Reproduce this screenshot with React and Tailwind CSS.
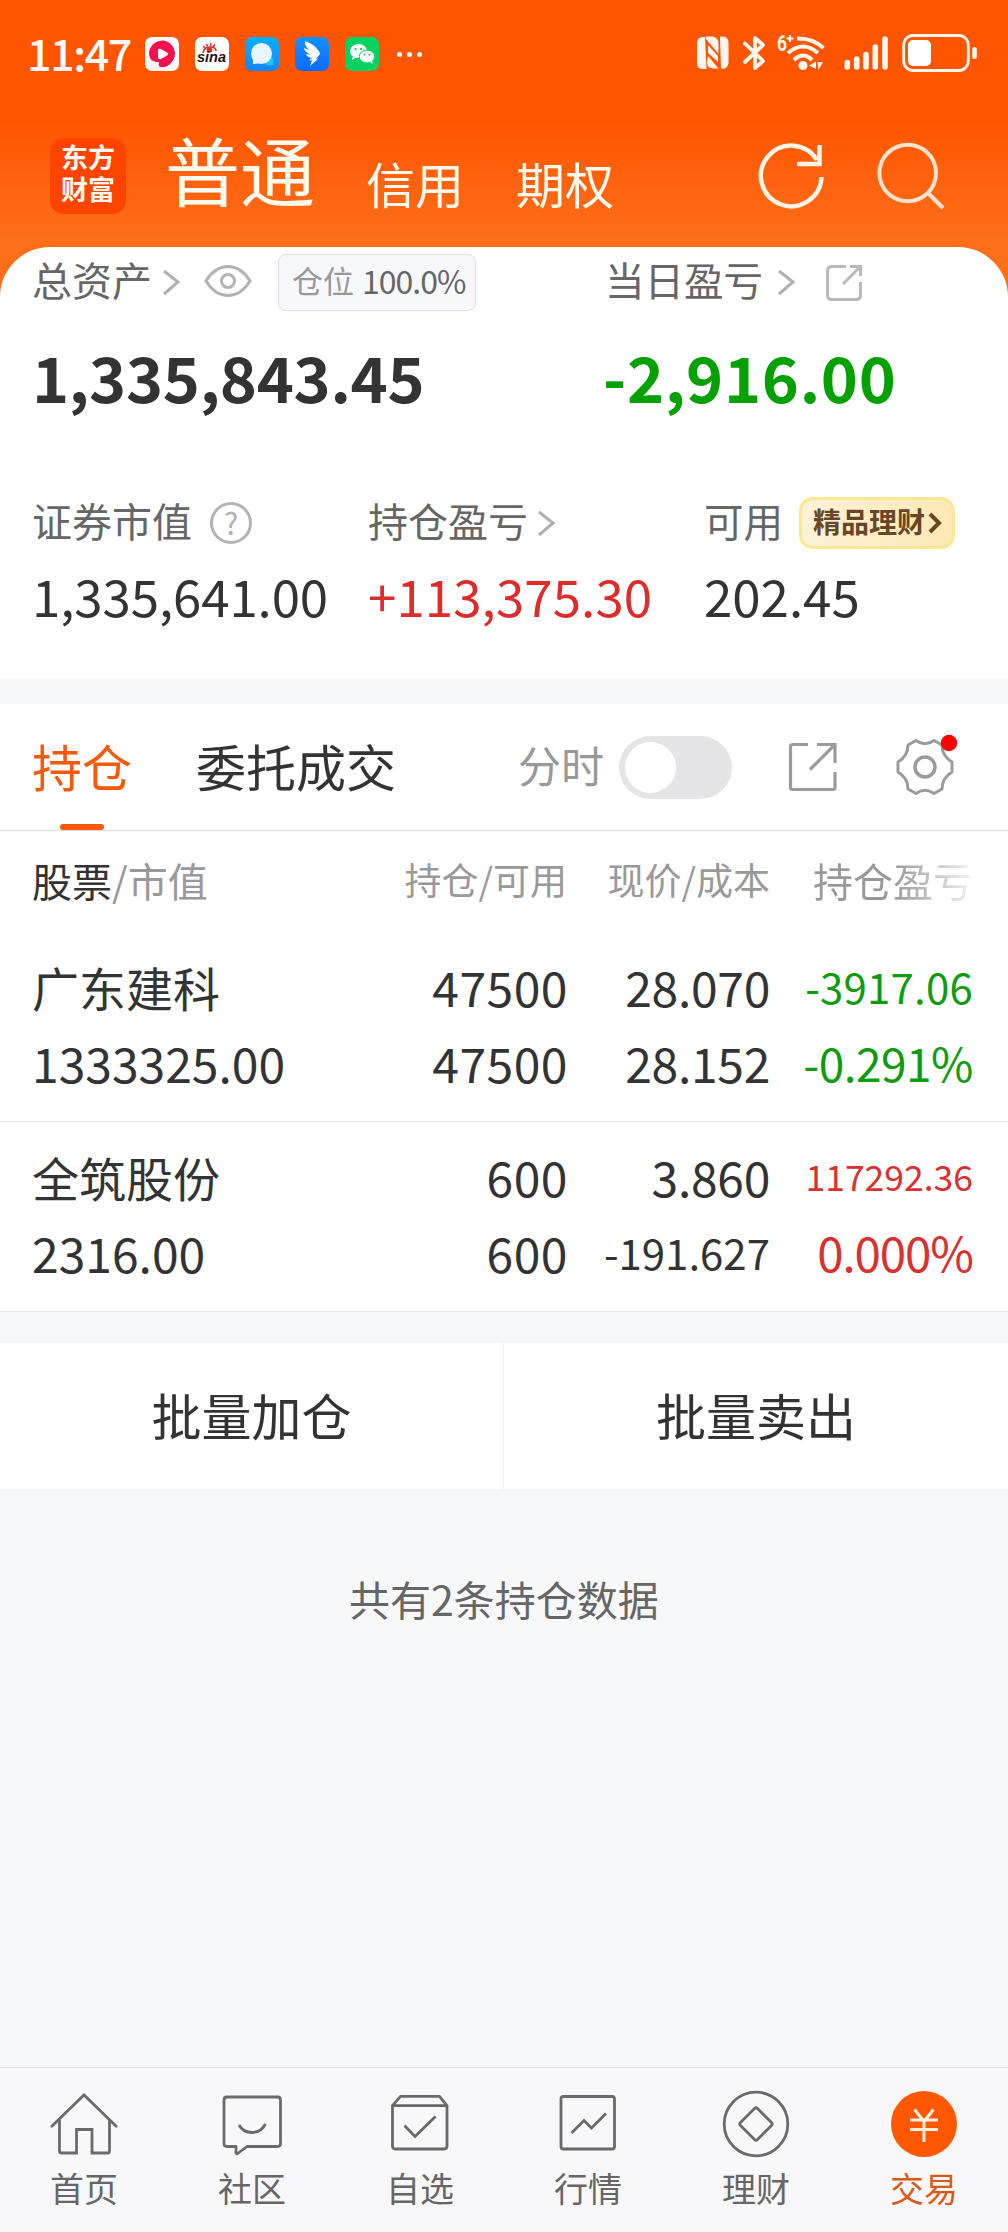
import { useState } from "react";

const holdings = [
  {
    name: "广东建科",
    value: "1333325.00",
    amount: "47500",
    available: "47500",
    price: "28.070",
    cost: "28.152",
    profit: "-3917.06",
    percent: "-0.291%",
    color: "text-[#0f9b0f]",
    costClass: "text-[48px] tracking-[-0.3px]",
    profitClass: "text-[42px] tracking-[0.2px]",
    percentClass: "text-[46px] tracking-[-0.5px]",
  },
  {
    name: "全筑股份",
    value: "2316.00",
    amount: "600",
    available: "600",
    price: "3.860",
    cost: "-191.627",
    profit: "117292.36",
    percent: "0.000%",
    color: "text-[#d93030]",
    costClass: "text-[42px]",
    profitClass: "text-[35.5px]",
    percentClass: "text-[47.5px] tracking-[-1.1px]",
  },
];

function Chevron() {
  return (
    <svg width="20" height="28" viewBox="0 0 20 28" fill="none" stroke="#b0b0b0" strokeWidth="3">
      <path d="M3 3 L17 14 L3 26" />
    </svg>
  );
}

function AppIcons() {
  return (
    <div className="flex gap-4 ml-[13px]">
      <svg width="34" height="34" viewBox="0 0 34 34">
        <rect width="34" height="34" rx="7" fill="#fff" />
        <path d="M4 17 A13 13 0 1 1 26 26 Q22 31 15 30 Q13 29 14 25 Q5 26 4 17Z" fill="#f5114c" />
        <path d="M13 13 Q13 11 16 12 L22 15.5 Q24 17 22 18.5 L16 22 Q13 23 13 20Z" fill="#fff" />
      </svg>
      <svg width="34" height="34" viewBox="0 0 34 34">
        <rect width="34" height="34" rx="7" fill="#fff" />
        <g fill="none" stroke="#d8301c" strokeWidth="1.6">
          <path d="M8 16 Q9 10 15 10 Q21 10 21 14" />
          <path d="M10 11 L8 9 M12.5 9.500 L11.500 7 M15.500 9 L16 6 M18 10 L20 7.500" />
          <circle cx="14.500" cy="13" r="2" fill="#d8301c" />
        </g>
        <text
          x="2"
          y="24.500"
          fontSize="14"
          fontWeight="bold"
          fontStyle="italic"
          fontFamily="Liberation Sans, sans-serif"
          textLength="29"
          lengthAdjust="spacingAndGlyphs"
          fill="#2b1010"
        >
          sina
        </text>
      </svg>
      <svg width="34" height="34" viewBox="0 0 34 34">
        <defs>
          <linearGradient id="chatBlue" x1="0" y1="0" x2="0" y2="1">
            <stop offset="0" stopColor="#06b0ff" />
            <stop offset="1" stopColor="#1485f7" />
          </linearGradient>
        </defs>
        <rect width="34" height="34" rx="7" fill="url(#chatBlue)" />
        <circle cx="24" cy="24" r="4.500" fill="#1cc3fb" />
        <path d="M24 27 L29 28.500 L27 23Z" fill="#1cc3fb" />
        <circle cx="16.500" cy="16.500" r="10.500" fill="#e9f5ff" />
        <path d="M8 20 L8 27 L16 26Z" fill="#e9f5ff" />
      </svg>
      <svg width="34" height="34" viewBox="0 0 34 34">
        <defs>
          <linearGradient id="wingBlue" x1="0" y1="0" x2="0" y2="1">
            <stop offset="0" stopColor="#1590ff" />
            <stop offset="1" stopColor="#0a6cff" />
          </linearGradient>
        </defs>
        <rect width="34" height="34" rx="7" fill="url(#wingBlue)" />
        <path
          d="M10 4 Q20 8 22 12 Q25 14 25 17 L21 22 L23 22 L15 29 L17 23.500 L14 23 L17 21 Q12 20 11 17 L15 17.500 Q9 14 9 11 L14 13 Q9 8 10 4Z"
          fill="#fff"
        />
      </svg>
      <svg width="34" height="34" viewBox="0 0 34 34">
        <rect width="34" height="34" rx="7" fill="#07d160" />
        <ellipse cx="13.500" cy="14" rx="8.500" ry="7" fill="#fff" />
        <path d="M8 18 L7 23 L12 20Z" fill="#fff" />
        <ellipse cx="22" cy="19.500" rx="7.700" ry="6.500" fill="#fff" stroke="#07d160" strokeWidth="1" />
        <path d="M24 24 L27.500 27 L27 22Z" fill="#fff" />
        <g fill="#07c15a">
          <circle cx="10.500" cy="12" r="1.100" />
          <circle cx="16" cy="12" r="1.100" />
          <circle cx="19.500" cy="17.500" r="1" />
          <circle cx="24.500" cy="17.500" r="1" />
        </g>
      </svg>
    </div>
  );
}

function SystemIcons() {
  return (
    <svg width="280" height="40" viewBox="0 0 280 40" fill="none" stroke="#fff7ee">
      {/* nfc */}
      <g fill="#fff7ee" stroke="none">
        <path d="M6 3 H8 L9.500 35 H6 Q0 35 0 29 V9 Q0 3 6 3Z" />
        <path d="M9 2.500 H15 Q21 3 21.500 9 V20 L9 5Z" />
        <path d="M23 2.500 H26 Q31.500 3 31.500 9 V29 Q31 34 26 35 L24 34Z" />
        <path d="M11 11 L21 22 V28 L11 19Z" />
        <path d="M11 22 L21.500 34.500 H16 Q10 34 10 28Z" />
      </g>
      {/* bluetooth */}
      <path d="M48 9.500 L66 27 L58 34 V4 L66 11 L48 28" strokeWidth="3.800" strokeLinejoin="round" strokeLinecap="round" />
      {/* wifi */}
      <g strokeWidth="4">
        <path d="M100 4.500 Q116 4 126.500 14" />
        <path d="M91 19 Q106 6 121 19" />
        <path d="M97 26 Q106 17 115 26" />
      </g>
      <circle cx="106" cy="31.500" r="4.500" fill="#fff7ee" stroke="none" />
      <path d="M112 31.500 L119 27.500 V35 Z M120.500 28 H126 L121.500 36Z" fill="#fff7ee" stroke="none" />
      <text
        x="80"
        y="17"
        fontSize="22"
        fontWeight="bold"
        fontFamily="Roboto, sans-serif"
        textLength="10"
        lengthAdjust="spacingAndGlyphs"
        fill="#fff7ee"
        stroke="none"
      >
        6
      </text>
      <path d="M89.500 4.500 H96.500 M93 1 V8" strokeWidth="2.200" />
      {/* signal */}
      <g strokeWidth="5.600" strokeLinecap="round">
        <path d="M150.300 28.500 V33 M159.700 25 V33 M169 20.500 V33 M178.300 13 V33 M188 5 V33" />
      </g>
      {/* battery */}
      <rect x="206.700" y="1.500" width="64.600" height="35" rx="9.500" strokeWidth="2.800" />
      <rect x="211" y="6" width="23" height="26" rx="5" fill="#fff" stroke="none" />
      <rect x="275.300" y="13" width="4.500" height="12" rx="2" fill="#fff7ee" stroke="none" />
    </svg>
  );
}

function StatusBar() {
  return (
    <div className="flex items-center justify-between h-[108px] pl-[27px] pr-[31px] text-white">
      <div className="flex items-center">
        <span className="w-[105px] -mt-[4px] text-[43px] leading-none font-medium tracking-[-1.4px]">11:47</span>
        <AppIcons />
        <div className="flex gap-[5px] ml-[18px]">
          <i className="size-[5px] rounded-full bg-white" />
          <i className="size-[5px] rounded-full bg-white" />
          <i className="size-[5px] rounded-full bg-white" />
        </div>
      </div>
      <SystemIcons />
    </div>
  );
}

function TopBar() {
  return (
    <div className="flex items-start h-[139px] pl-[50px] text-[#fffaf0]">
      <div className="mt-[30px] flex size-[76px] flex-col items-center rounded-[14px] bg-[#ff4400] pt-[5px] font-['Liberation_Sans','Noto_Sans_CJK_SC',sans-serif] text-[27px] leading-[32px] font-bold">
        <span>东方</span>
        <span>财富</span>
      </div>
      <span className="mt-[23px] ml-[39px] w-[150px] text-[75px] leading-[75px]">普通</span>
      <span className="mt-[50px] ml-[51px] w-[100px] text-[49px] leading-[50px]">信用</span>
      <span className="mt-[50px] ml-[50px] w-[100px] text-[49px] leading-[50px]">期权</span>
      <svg className="mt-[31px] ml-[139px]" width="72" height="72" viewBox="0 0 72 72" fill="none" stroke="#fff4e6" strokeWidth="4.500">
        <path d="M66.500 38 A30.300 30.300 0 1 1 62 21" />
        <path d="M64.500 6 V25 H42" />
      </svg>
      <svg className="mt-[32px] ml-[47px]" width="72" height="72" viewBox="0 0 72 72" fill="none" stroke="#ffe3cf" strokeWidth="4">
        <circle cx="33.700" cy="33" r="28.300" />
        <path d="M53 52 L69 68" />
      </svg>
    </div>
  );
}

function AssetCard() {
  return (
    <section className="h-[432px] rounded-t-[50px] bg-white pl-[32px] text-[#333]">
      <div className="flex h-[70px]">
        <div className="flex items-center w-[573px]">
          <span className="-mt-[7px] text-[40px] leading-none text-[#666]">总资产</span>
          <span className="ml-[9px]">
            <Chevron />
          </span>
          <svg className="ml-[23px] -mt-[2px]" width="48" height="34" viewBox="0 0 48 34" fill="none" stroke="#b3b3b3" strokeWidth="3">
            <path d="M2 17 Q11 2.500 24 2.500 Q37 2.500 46 17 Q37 31.500 24 31.500 Q11 31.500 2 17Z" />
            <circle cx="24" cy="17" r="6.500" />
          </svg>
          <div className="flex items-center ml-[26px] h-[57px] w-[198px] rounded-[8px] border border-[#dedede] bg-[#f7f8fb] pl-[13px] pb-[5px] text-[31px] leading-none whitespace-nowrap">
            <span className="text-[#999]">仓位</span>
            <span className="ml-[8px] text-[32px] tracking-[-1px] text-[#666]">100.0%</span>
          </div>
        </div>
        <div className="flex items-center">
          <span className="-mt-[7px] text-[39.5px] leading-none text-[#666]">当日盈亏</span>
          <span className="ml-[13px]">
            <Chevron />
          </span>
          <svg className="ml-[28px] mt-[2px]" width="40" height="40" viewBox="0 0 40 40" fill="none" stroke="#b9b9b9" strokeWidth="3">
            <path d="M22 3.500 H8 Q3.500 3.500 3.500 8 V32 Q3.500 36.500 8 36.500 H32 Q36.500 36.500 36.500 32 V19" />
            <path d="M26 3.500 H36.500 V13 M36 4 L19 21" />
          </svg>
        </div>
      </div>

      <div className="flex items-center h-[117px] text-[63px] leading-none font-bold whitespace-nowrap">
        <span className="w-[571px] tracking-[-0.3px]">1,335,843.45</span>
        <span className="tracking-[0.7px] text-[#04a004]">-2,916.00</span>
      </div>

      <div className="grid grid-cols-[336px_336px_1fr] mt-[59px] text-[40px] leading-none text-[#666]">
        <div className="flex items-center h-[60px]">
          <span className="-mt-[7px]">证券市值</span>
          <span className="ml-[18px] flex size-[42px] items-center justify-center rounded-full border-[3px] border-[#b3b3b3] pb-[3px] text-[30px] text-[#b0b0b0]">
            ?
          </span>
        </div>
        <div className="flex items-center h-[60px]">
          <span className="-mt-[7px]">持仓盈亏</span>
          <span className="ml-[8px]">
            <Chevron />
          </span>
        </div>
        <div className="flex items-center h-[60px]">
          <span className="-mt-[7px] text-[39.5px]">可用</span>
          <div className="flex items-center ml-[16px] h-[52px] w-[156px] rounded-[14px] border-[3px] border-[#fbe795] bg-linear-to-r from-[#fdf2d8] to-[#fde9b3] pl-[11px] text-[28px] font-bold text-[#6b4526]">
            <span className="-mt-[4px]">精品理财</span>
            <svg className="ml-[3px]" width="14" height="22" viewBox="0 0 14 22" fill="none" stroke="#6b4526" strokeWidth="4">
              <path d="M2 2 L11 11 L2 20" />
            </svg>
          </div>
        </div>
      </div>

      <div className="grid grid-cols-[336px_336px_1fr] items-center mt-[2px] h-[80px] text-[51px] leading-none whitespace-nowrap">
        <span className="tracking-[-0.1px]">1,335,641.00</span>
        <span className="tracking-[0.1px] text-[#dd2c2c]">+113,375.30</span>
        <span>202.45</span>
      </div>
    </section>
  );
}

function TabBar({ tab, setTab, timeline, setTimeline }) {
  return (
    <div className="flex items-center h-[127px] border-b border-[#dcdcdc] bg-white pl-[32px] text-[50px] leading-none">
      <button
        onClick={() => setTab("hold")}
        className={tab === "hold" ? "relative flex h-full items-center pb-[5px] text-[#f55a0a]" : "relative flex h-full items-center pb-[5px] text-[#333]"}
      >
        持仓
        {tab === "hold" && <i className="absolute bottom-0 left-[28px] h-[6px] w-[44px] rounded-full bg-[#fb560a]" />}
      </button>
      <button
        onClick={() => setTab("orders")}
        className={tab === "orders" ? "ml-[64px] pb-[5px] text-[#f55a0a]" : "ml-[64px] pb-[5px] text-[#333]"}
      >
        委托成交
      </button>
      <span className="ml-[122px] pb-[5px] text-[43px] text-[#999]">分时</span>
      <button
        onClick={() => setTimeline(!timeline)}
        className={
          timeline
            ? "ml-[15px] flex h-[63px] w-[113px] items-center justify-end rounded-full bg-[#fb560a] px-[6px]"
            : "ml-[15px] flex h-[63px] w-[113px] items-center rounded-full bg-[#e5e5e7] px-[6px]"
        }
      >
        <i className="size-[51px] rounded-full bg-white" />
      </button>
      <svg className="ml-[55px]" width="52" height="52" viewBox="0 0 52 52" fill="none" stroke="#9b9b9b" strokeWidth="3.200">
        <path d="M21 3.500 H6 Q3.500 3.500 3.500 6 V46.500 Q3.500 48.500 6 48.500 H46 Q48 48.500 48 46.500 V31" />
        <path d="M30 3.500 H48 V22 M47.500 4 L23 28.500" />
      </svg>
      <svg className="ml-[56px]" width="64" height="72" viewBox="0 0 64 72" fill="none" stroke="#9b9b9b" strokeWidth="3">
        <path
          strokeLinejoin="round"
          d="M21 9.500 Q30 16 39 9.500 L47 14 Q47 25 57 31 V41 Q47 47 47 58 L39 62.500 Q30 56 21 62.500 L13 58 Q13 47 3 41 V31 Q13 25 13 14Z"
        />
        <circle cx="30" cy="36" r="10" strokeWidth="3.500" />
        <circle cx="54" cy="12" r="8.200" fill="#fe0000" stroke="none" />
      </svg>
    </div>
  );
}

function HoldingTable() {
  return (
    <div className="bg-white text-[#333] leading-none whitespace-nowrap">
      <div className="grid grid-cols-[346px_189px_203px_204px] items-center h-[101px] pl-[32px] pb-[4px] text-[37px] text-[#999]">
        <span className="text-[40px]">
          <span className="text-[#333]">股票</span>/市值
        </span>
        <span className="text-right">持仓/可用</span>
        <span className="text-right">现价/成本</span>
        <span className="bg-linear-to-r from-[#999] from-60% to-[#f4f4f4] bg-clip-text pb-[4px] -mb-[4px] pl-[43px] text-[40px] text-transparent">
          持仓盈亏
        </span>
      </div>
      {holdings.map((h) => (
        <div
          key={h.name}
          className="grid grid-cols-[346px_190px_202px_203px] auto-rows-[76px] items-center border-b border-[#e8e8ea] pl-[32px] pt-[16px] pb-[21px] text-[48px]"
        >
          <span className="text-[47px]">{h.name}</span>
          <span className="text-right tracking-[0.5px]">{h.amount}</span>
          <span className="text-right tracking-[-0.3px]">{h.price}</span>
          <span className={`text-right ${h.color} ${h.profitClass}`}>{h.profit}</span>
          <span>{h.value}</span>
          <span className="text-right tracking-[0.5px]">{h.available}</span>
          <span className={`text-right ${h.costClass}`}>{h.cost}</span>
          <span className={`text-right ${h.color} ${h.percentClass}`}>{h.percent}</span>
        </div>
      ))}
    </div>
  );
}

const navItems = [
  {
    label: "首页",
    icon: (
      <>
        <path d="M3 40 L36 8 L69 40" />
        <path d="M11.500 33 V64 Q11.500 66 13.500 66 H28.500 V42.500 H44 V66 H59.500 Q61.500 66 61.500 64 V33" />
      </>
    ),
  },
  {
    label: "社区",
    icon: (
      <>
        <path
          strokeLinejoin="round"
          d="M11 10 H61.500 Q64.500 10 64.500 13 V56.500 Q64.500 59.500 61.500 59.500 H31 L21 67 L20 66 V59.500 H11 Q8 59.500 8 56.500 V13 Q8 10 11 10Z"
        />
        <path d="M23 38 Q27 45.500 36 45.500 Q45 45.500 49.500 37" />
      </>
    ),
  },
  {
    label: "自选",
    icon: (
      <>
        <path strokeLinejoin="round" d="M8.500 18.700 L16.500 9.300 H55.500 L63 18.700 V59 Q63 62 60 62 H11.500 Q8.500 62 8.500 59Z M8.500 18.700 H63" />
        <path d="M20.500 38.500 L31 49.500 L51.500 29.500" />
      </>
    ),
  },
  {
    label: "行情",
    icon: (
      <>
        <rect x="9" y="9.500" width="53.500" height="52.500" rx="2.500" />
        <path d="M19.500 46 L32 33.500 L39.500 41 L54 26.500" />
      </>
    ),
  },
  {
    label: "理财",
    icon: (
      <>
        <circle cx="36" cy="37" r="31.800" />
        <path strokeLinejoin="round" d="M34.500 21.500 Q36 20 37.500 21.500 L51.500 35.500 Q53 37 51.500 38.500 L37.500 52.500 Q36 54 34.500 52.500 L20.500 38.500 Q19 37 20.500 35.500Z" />
      </>
    ),
  },
  {
    label: "交易",
    active: true,
    icon: (
      <>
        <circle cx="36" cy="37" r="33" fill="#ff5800" stroke="none" />
        <path d="M26.500 22.500 L36 34.500 L45.500 22.500 M36 33 V55 M22 33 H50 M22 42.500 H50" stroke="#fff1e2" strokeWidth="3" />
      </>
    ),
  },
];

function BottomNav() {
  return (
    <nav className="grid grid-cols-6 h-[165px] border-t border-[#dedfe1] bg-[#f8f8fa] pt-[19px]">
      {navItems.map((item) => (
        <div key={item.label} className="flex flex-col items-center">
          <svg width="72" height="72" viewBox="0 0 72 72" fill="none" stroke="#6a6a6a" strokeWidth="2.800">
            {item.icon}
          </svg>
          <span className={item.active ? "text-[34px] leading-[58px] text-[#dc5a18]" : "text-[34px] leading-[58px] text-[#666]"}>
            {item.label}
          </span>
        </div>
      ))}
    </nav>
  );
}

export default function App() {
  const [tab, setTab] = useState("hold");
  const [timeline, setTimeline] = useState(false);

  return (
    <div className="flex h-[2232px] w-[1008px] flex-col overflow-hidden bg-[#f7f8fa] font-['Noto_Sans_CJK_SC','Noto_Sans',sans-serif]">
      <div className="bg-linear-to-b from-[#ff5500] from-[120px] to-[#ff6e18] to-[240px]">
        <StatusBar />
        <TopBar />
        <AssetCard />
      </div>

      <div className="mt-[25px]">
        <TabBar tab={tab} setTab={setTab} timeline={timeline} setTimeline={setTimeline} />
        <HoldingTable />
      </div>

      <div className="grid grid-cols-2 mt-[31px] h-[146px] bg-white text-[50px] leading-none text-[#333]">
        <button className="border-r border-[#f0f0f2] pb-[5px]">批量加仓</button>
        <button className="pb-[5px]">批量卖出</button>
      </div>

      <p className="mt-[77px] flex-1 text-center text-[41px] leading-[64px] text-[#666]">共有2条持仓数据</p>

      <BottomNav />
    </div>
  );
}
